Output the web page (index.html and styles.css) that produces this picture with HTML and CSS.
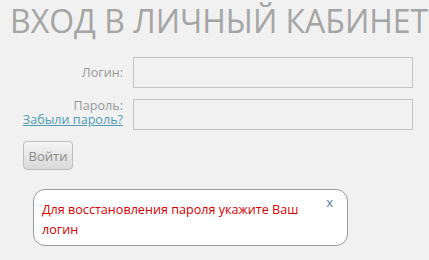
FILE: index.html
```html
<!DOCTYPE html>
<html lang="ru">
<head>
    <meta charset="UTF-8">
    <title>Вход в личный кабинет</title>
    <link rel="stylesheet" href="styles.css">
</head>
<body>
    <h1 class="title">ВХОД В ЛИЧНЫЙ КАБИНЕТ</h1>

    <form class="login-form">
        <div class="row">
            <label class="label label-login" for="login">Логин:</label>
            <input class="field" type="text" id="login">
        </div>
        <div class="row">
            <div class="label">
                <label for="pass">Пароль:</label>
                <a class="forgot" href="#">Забыли пароль?</a>
            </div>
            <input class="field" type="password" id="pass">
        </div>
        <button class="submit" type="button">Войти</button>
    </form>

    <div class="notice">
        <span class="notice-text">Для восстановления пароля укажите Ваш логин</span>
        <a class="notice-close" href="#">x</a>
    </div>
</body>
</html>
```

FILE: styles.css
```css
body {
    margin: 0;
    padding: 0 4px 0 10px;
    background: #f1f1f1;
    font-family: "Open Sans", Arial, sans-serif;
    font-size: 12.6px;
    color: #999;
}
.title {
    margin: 0;
    font-size: 32px;
    font-weight: normal;
    line-height: 42px;
    color: #a5a5a5;
    white-space: nowrap;
}
.login-form {
    margin-top: 15px;
}
.row {
    display: grid;
    grid-template-columns: 113px 280px;
    column-gap: 10px;
    margin-bottom: 11px;
}
.label {
    text-align: right;
    padding-top: 0;
    line-height: 13.5px;
}
.label-login {
    padding-top: 8px;
    line-height: 16px;
}
.label label {
    display: block;
}
.forgot {
    color: #4f9cb5;
    text-decoration: underline;
}
.field {
    box-sizing: border-box;
    height: 31px;
    margin: 0;
    border: 1px solid #c4c4c4;
    background: #f1f1f1;
}
.submit {
    margin: 0 0 0 13px;
    width: 50px;
    height: 29px;
    padding: 0;
    border: 1px solid #bdbdbd;
    border-radius: 4px;
    background: linear-gradient(#f4f4f4, #d9d9d9);
    font-family: "Open Sans", Arial, sans-serif;
    font-size: 13px;
    color: #8a8a8a;
}
.notice {
    position: relative;
    box-sizing: border-box;
    width: 315px;
    margin: 19px 0 0 23px;
    padding: 10px 30px 5px 8px;
    border: 1px solid #9a9a9a;
    border-radius: 12px;
    background: #fff;
    line-height: 20px;
    color: #d40000;
}
.notice-close {
    position: absolute;
    top: 2px;
    right: 14px;
    color: #4d7ea3;
    text-decoration: none;
    font-size: 13px;
}
```
